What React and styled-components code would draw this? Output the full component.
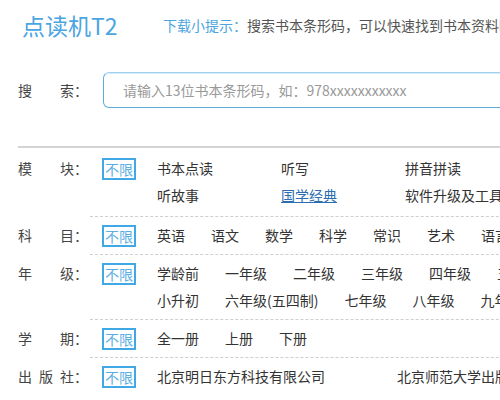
import React from "react";
import styled, { createGlobalStyle } from "styled-components";

const Global = createGlobalStyle`
  html, body { margin: 0; padding: 0; overflow: hidden; background: #fff; }
  body { font-family: "Noto Sans CJK SC", "Microsoft YaHei", sans-serif; color: #333; }
`;

const Page = styled.div`
  width: 1000px;
`;

const Header = styled.header`
  display: flex;
  align-items: center;
  height: 50px;
  padding-left: 22px;
`;

const Title = styled.h1`
  flex: 0 0 141px;
  margin: 0;
  font-size: 23px;
  font-weight: 400;
  line-height: 1;
  color: #4ba5e2;
`;

const Tip = styled.p`
  margin: 0;
  font-size: 14px;
  color: #555;
  white-space: nowrap;
`;

const TipLead = styled.span`
  color: #4ba5e2;
`;

const SearchRow = styled.div`
  display: flex;
  align-items: center;
  margin-top: 22px;
  padding-left: 18px;
`;

const LabelWrap = styled.div`
  flex: 0 0 ${(p) => p.$w}px;
  display: flex;
  font-size: 14px;
  line-height: 27px;
  color: #444;
  padding-top: ${(p) => p.$top || 0}px;
  align-self: flex-start;
`;

const SearchLabelWrap = styled(LabelWrap)`
  align-self: center;
`;

const LabelText = styled.span`
  display: inline-block;
  width: 56px;
  text-align: justify;
  text-align-last: justify;
`;

const SearchInput = styled.input`
  box-sizing: border-box;
  width: 620px;
  height: 36px;
  padding: 0 19px;
  border: 1px solid #5eaddc;
  border-top-color: #9fd0ee;
  border-radius: 6px;
  box-shadow: inset 0 1px 0 #d6ecf9;
  font-family: "Noto Sans CJK SC", "Microsoft YaHei", sans-serif;
  font-size: 14px;
  color: #333;
  outline: none;
  &::placeholder { color: #999; }
`;

const Divider = styled.hr`
  margin: 38px 0 0 18px;
  border: 0;
  height: 2px;
  background: #d4d4d4;
`;

const Row = styled.div`
  display: flex;
  padding-left: 18px;
`;

const Content = styled.div`
  flex: 1;
  display: flex;
  align-items: flex-start;
  padding: ${(p) => p.$pad}px 0;
  border-bottom: ${(p) => (p.$last ? "none" : "1px dashed #cfcfcf")};
`;

const AnyWrap = styled.div`
  height: 27px;
  display: flex;
  align-items: center;
  margin-left: 12px;
  margin-right: 21px;
`;

const AnyBox = styled.span`
  display: inline-block;
  padding: 0 1px;
  border: 2px solid #40a8e4;
  font-size: 14px;
  line-height: 18px;
  color: #5aaee6;
`;

const Items = styled.div`
  display: flex;
  flex-wrap: wrap;
  width: 500px;
`;

const Item = styled.a`
  display: block;
  font-size: 14px;
  line-height: 27px;
  white-space: nowrap;
  color: ${(p) => (p.$link ? "#2b6db3" : "#333")};
  text-decoration: ${(p) => (p.$link ? "underline" : "none")};
  ${(p) => (p.$w ? `width: ${p.$w}px;` : "margin-right: 26px;")}
`;

const filters = [
  {
    label: "模块",
    pad: 7,
    w: 124,
    items: ["书本点读", "听写", "拼音拼读", "口语评测", "听故事", { t: "国学经典", link: true }, "软件升级及工具"],
  },
  {
    label: "科目",
    pad: 5,
    items: ["英语", "语文", "数学", "科学", "常识", "艺术", "语言", "其他"],
  },
  {
    label: "年级",
    pad: 5,
    items: ["学龄前", "一年级", "二年级", "三年级", "四年级", "五年级", "六年级", "小升初", "六年级(五四制)", "七年级", "八年级", "九年级"],
  },
  {
    label: "学期",
    pad: 5,
    items: ["全一册", "上册", "下册"],
  },
  {
    label: "出版社",
    pad: 5,
    w: 240,
    last: true,
    items: ["北京明日东方科技有限公司", "北京师范大学出版社"],
  },
];

export default function App() {
  return (
    <Page>
      <Global />
      <Header>
        <Title>点读机T2</Title>
        <Tip>
          <TipLead>下载小提示：</TipLead>搜索书本条形码，可以快速找到书本资料哦！
        </Tip>
      </Header>
      <SearchRow>
        <SearchLabelWrap $w={85}>
          <LabelText>搜索</LabelText>：
        </SearchLabelWrap>
        <SearchInput placeholder="请输入13位书本条形码，如：978xxxxxxxxxxx" />
      </SearchRow>
      <Divider />
      {filters.map((f) => (
        <Row key={f.label}>
          <LabelWrap $w={72} $top={f.pad}>
            <LabelText>{f.label}</LabelText>：
          </LabelWrap>
          <Content $pad={f.pad} $last={f.last}>
            <AnyWrap>
              <AnyBox>不限</AnyBox>
            </AnyWrap>
            <Items>
              {f.items.map((it) => {
                const t = typeof it === "string" ? it : it.t;
                const link = typeof it === "string" ? false : it.link;
                return (
                  <Item key={t} href="#" $w={f.w} $link={link}>
                    {t}
                  </Item>
                );
              })}
            </Items>
          </Content>
        </Row>
      ))}
    </Page>
  );
}
